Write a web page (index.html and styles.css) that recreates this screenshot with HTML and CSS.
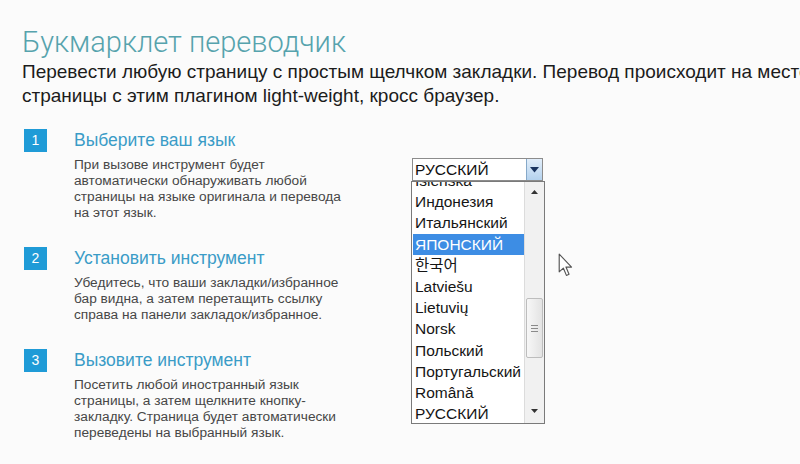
FILE: index.html
```html
<!DOCTYPE html>
<html lang="ru">
<head>
<meta charset="utf-8">
<title>Букмарклет переводчик</title>
<link rel="stylesheet" href="styles.css">
</head>
<body>
<div class="page">
  <h1 class="title">Букмарклет переводчик</h1>
  <p class="lead">Перевести любую страницу с простым щелчком закладки. Перевод происходит на месте<br>страницы с этим плагином light-weight, кросс браузер.</p>
  <div class="main">
    <div class="steps">
      <div class="step">
        <div class="num">1</div>
        <div class="step-body">
          <div class="step-title">Выберите ваш язык</div>
          <p class="step-text">При вызове инструмент будет<br>автоматически обнаруживать любой<br>страницы на языке оригинала и перевода<br>на этот язык.</p>
        </div>
      </div>
      <div class="step">
        <div class="num">2</div>
        <div class="step-body">
          <div class="step-title">Установить инструмент</div>
          <p class="step-text">Убедитесь, что ваши закладки/избранное<br>бар видна, а затем перетащить ссылку<br>справа на панели закладок/избранное.</p>
        </div>
      </div>
      <div class="step">
        <div class="num">3</div>
        <div class="step-body">
          <div class="step-title">Вызовите инструмент</div>
          <p class="step-text">Посетить любой иностранный язык<br>страницы, а затем щелкните кнопку-<br>закладку. Страница будет автоматически<br>переведены на выбранный язык.</p>
        </div>
      </div>
    </div>
    <div class="picker">
      <div class="select">
        <span class="select-value">РУССКИЙ</span>
        <span class="select-btn"><svg width="9" height="6" viewBox="0 0 9 6"><path d="M0 0H9L4.5 5.5Z" fill="#1b3560"/></svg></span>
      </div>
      <div class="list">
        <div class="options">
          <div class="options-inner">
            <div class="opt">Íslenska</div>
            <div class="opt">Индонезия</div>
            <div class="opt">Итальянский</div>
            <div class="opt opt-selected">ЯПОНСКИЙ</div>
            <div class="opt">한국어</div>
            <div class="opt">Latviešu</div>
            <div class="opt">Lietuvių</div>
            <div class="opt">Norsk</div>
            <div class="opt">Польский</div>
            <div class="opt">Португальский</div>
            <div class="opt">Română</div>
            <div class="opt">РУССКИЙ</div>
          </div>
        </div>
        <div class="scrollbar">
          <span class="sb-arrow"><svg width="7" height="4" viewBox="0 0 7 4"><path d="M0 4L3.5 0L7 4Z" fill="#333"/></svg></span>
          <span class="sb-thumb"><span class="grip"></span><span class="grip"></span><span class="grip"></span></span>
          <span class="sb-space"></span>
          <span class="sb-arrow sb-down"><svg width="7" height="4" viewBox="0 0 7 4"><path d="M0 0L7 0L3.5 4Z" fill="#333"/></svg></span>
        </div>
      </div>
      <svg class="cursor" width="15" height="24" viewBox="0 0 13 21"><path d="M1 1L1 16.5L4.6 13.2L7.3 19.6L9.6 18.6L6.9 12.3L11.8 12.3Z" fill="#fff" stroke="#555" stroke-width="1" stroke-linejoin="round"/></svg>
    </div>
  </div>
</div>
</body>
</html>
```
FILE: styles.css
```css
html, body {
  margin: 0;
  padding: 0;
  background: #fbfbfb;
  overflow: hidden;
}
body {
  width: 800px;
  height: 464px;
  font-family: "Liberation Sans", Arial, sans-serif;
}
.page {
  padding: 24px 0 0 22px;
}
.title {
  margin: 0;
  font-family: Roboto, "Open Sans", sans-serif;
  font-weight: 300;
  font-size: 29px;
  line-height: 36px;
  color: #56a3ad;
}
.lead {
  margin: 0;
  font-size: 19px;
  line-height: 24px;
  color: #1c1c1c;
  white-space: nowrap;
}
.main {
  display: flex;
  margin-top: 21px;
}
.steps {
  width: 389px;
  display: flex;
  flex-direction: column;
  gap: 26px;
}
.step {
  display: flex;
}
.num {
  margin-left: 2px;
  width: 23px;
  height: 23px;
  background: #1f9bd7;
  color: #fff;
  font-size: 14px;
  line-height: 23px;
  text-align: center;
  flex: none;
}
.step-body {
  margin-left: 27px;
}
.step-title {
  font-size: 17.5px;
  line-height: 23px;
  color: #3a9cc7;
}
.step-text {
  margin: 5px 0 0;
  font-size: 13.7px;
  line-height: 16px;
  color: #474747;
}
.picker {
  position: relative;
  margin-top: 29px;
  display: flex;
  flex-direction: column;
  align-items: flex-start;
}
.select {
  margin-left: 1px;
  width: 131px;
  height: 23px;
  box-sizing: border-box;
  border: 1px solid #8c8c8c;
  background: #fff;
  display: flex;
}
.select-value {
  flex: 1;
  padding-left: 2px;
  font-size: 15.5px;
  line-height: 21px;
  color: #111;
}
.select-btn {
  width: 15px;
  background: linear-gradient(#e2eefa, #b4d2ee);
  border-left: 1px solid #86a9c9;
  display: flex;
  align-items: center;
  justify-content: center;
}
.list {
  width: 134px;
  height: 243px;
  box-sizing: border-box;
  border: 1px solid #7a7a7a;
  background: #fff;
  display: flex;
}
.options {
  flex: 1;
  overflow: hidden;
  padding: 0 0 0 1px;
}
.options-inner {
  margin-top: -12px;
}
.opt {
  height: 21.2px;
  line-height: 21.2px;
  padding-left: 2px;
  font-size: 15.5px;
  color: #151515;
  font-family: "Liberation Sans", Arial, "Noto Sans CJK KR", sans-serif;
  white-space: nowrap;
}
.opt-selected {
  background: #3d8de4;
  color: #fff;
}
.scrollbar {
  width: 19px;
  background: #f1f1f1;
  border-left: 1px solid #dcdcdc;
  display: flex;
  flex-direction: column;
  align-items: center;
}
.sb-arrow {
  height: 20px;
  display: flex;
  align-items: center;
  justify-content: center;
}
.sb-down {
  height: 24px;
}
.sb-thumb {
  margin-top: 96px;
  width: 17px;
  height: 60px;
  box-sizing: border-box;
  border: 1px solid #bdbdbd;
  border-radius: 2px;
  background: linear-gradient(to right, #f7f7f7, #e3e3e3);
  display: flex;
  flex-direction: column;
  align-items: center;
  justify-content: center;
  gap: 2px;
}
.grip {
  width: 7px;
  height: 1px;
  background: #8a8a8a;
}
.sb-space {
  flex: 1;
}
.cursor {
  position: absolute;
  left: 147px;
  top: 95px;
}
```
